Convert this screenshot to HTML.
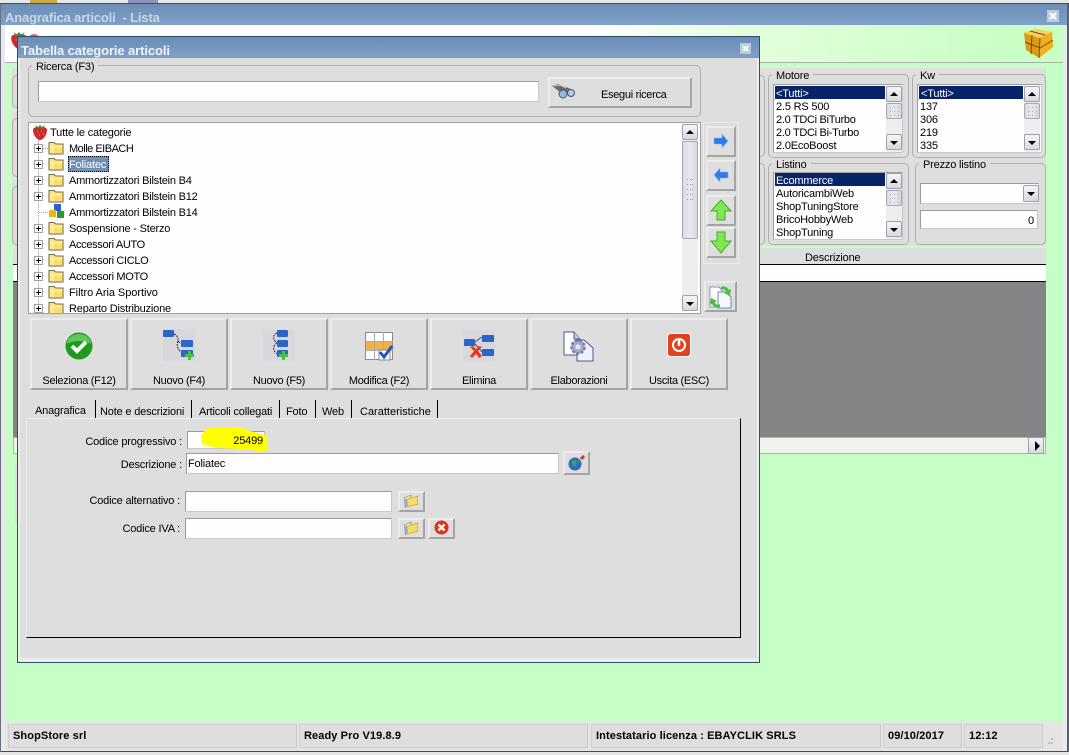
<!DOCTYPE html>
<html><head><meta charset="utf-8"><style>
html,body{margin:0;padding:0;width:1069px;height:755px;overflow:hidden;background:#e6e6e6}
*{box-sizing:border-box}
body{font:11px/14px "Liberation Sans",sans-serif;color:#000;position:relative}
div,span.a,svg{position:absolute}
.t{white-space:nowrap;height:14px;margin-top:1px;letter-spacing:-.18px}
.n{letter-spacing:-.3px}
.r{text-align:right}
.c{text-align:center}
.g{background:#dedede}
.gb{border:1px solid #aeaeae;border-radius:5px}
.lg{background:#dedede;padding:0 4px;white-space:nowrap;height:14px}
.inp{background:#fffdff;border:1px solid #9c9c9c;border-right-color:#c8c8c8;border-bottom-color:#c8c8c8}
.btn{background:#dedede;border:2px solid;border-color:#ececec #a4a4a4 #a4a4a4 #ececec}
.sb{background:#eeeeee}
.sbb{background:linear-gradient(#f4f4f8,#d8d8e0);border:1px solid #a0a0a8;border-radius:2px;width:16px;height:16px}
.th{background:linear-gradient(90deg,#dcdce2,#e8e8ee,#d8d8e0);border:1px solid #a8a8b2;border-radius:2px;width:16px}
.th.s:after{content:"";position:absolute;left:3px;top:3px;width:1px;height:1px;background:#a8a8b0;box-shadow:4px 0 #a8a8b0,8px 0 #a8a8b0,0 4px #a8a8b0,4px 4px #a8a8b0,8px 4px #a8a8b0,0 8px #a8a8b0,4px 8px #a8a8b0,8px 8px #a8a8b0}
.up:after,.dn:after{content:"";position:absolute;left:3px;width:0;height:0;border-left:4px solid transparent;border-right:4px solid transparent}
.up:after{top:5px;border-bottom:4px solid #000}
.dn:after{top:6px;border-top:4px solid #000}
.sel{background:#082468;color:#fff;height:13px}
.st{background:#dedede;border:1px solid #d2ccd2;border-right-color:#c8c8c8;top:724px;height:24px;font-family:"Liberation Sans",sans-serif;font-weight:bold;letter-spacing:.1px;padding:4px 0 0 4px;white-space:nowrap}
.tab{border-right:1px solid #000;border-bottom:0;height:18px;top:400px}
</style></head><body>
<svg width="0" height="0" style="left:0;top:0">
<defs>
<symbol id="fo" viewBox="0 0 16 16"><path d="M1 2.500h5l1.500 1.500H15V14H1z" fill="#ffe88a" stroke="#7a6a30" stroke-width="1"/><path d="M2 5h12v8H2z" fill="#ffec8e"/><path d="M6 8h8v5H6z" fill="#f7d060" opacity=".6"/></symbol>
<symbol id="pl" viewBox="0 0 9 9"><rect x=".5" y=".5" width="8" height="8" fill="#fff" stroke="#a0a0a0"/><path d="M2 4.500h5M4.500 2v5" stroke="#000"/></symbol>
<symbol id="sw" viewBox="0 0 16 17"><path d="M1 6c0-3 4-3 7-3s7 0 7 3c0 5-4 10-7 10S1 11 1 6z" fill="#cc2a2a"/><path d="M3 1l3 2 2-2 2 2 3-2-2 4-3-1-3 1z" fill="#4c8a2a"/><path d="M5 8h1M9 7h1M7 11h1M11 10h1" stroke="#ef9a9a"/></symbol>
<symbol id="bf" viewBox="0 0 22 18"><path d="M3 5l8-3v12l-7 3z" fill="#ffe98a" stroke="#9a9aa0"/><path d="M6 7l13-4v10l-12 3z" fill="#f6dc62" stroke="#c8b040"/><path d="M3 6l3 1v8l-2 2z" fill="#8fa6e0"/></symbol>
</defs>
</svg>

<!-- top strip -->
<div style="left:30px;top:0;width:27px;height:4px;background:#c8a840"></div>
<div style="left:128px;top:0;width:30px;height:4px;background:#9090b8"></div>
<div style="left:0;top:3px;width:1069px;height:1px;background:#3a5068"></div>

<!-- main window -->
<div style="left:0;top:4px;width:1069px;height:748px;background:#e9e9e9;border-left:1px solid #6a7080;border-right:2px solid #56606e;border-bottom:1px solid #3a5068"></div>
<div style="left:1px;top:4px;width:1066px;height:21px;background:linear-gradient(#6a8db6,#7fa0c8)"></div>
<div class="t" style="left:5px;top:10px;font-size:13px;font-weight:bold;color:#c9d6e6;letter-spacing:-.15px">Anagrafica articoli&nbsp; - Lista</div>
<svg style="left:1047px;top:10px" width="12" height="12"><rect width="12" height="12" fill="#b8cce0"/><path d="M3 3l6 6M9 3l-6 6" stroke="#fff" stroke-width="2.200"/></svg>

<div style="left:5px;top:25px;width:1058px;height:697px;background:#c6ffc6"></div>
<div style="left:5px;top:25px;width:1058px;height:37px;background:linear-gradient(90deg,#fff 0,#fff 55%,#e4ffdc 70%,#c8ffc4 95%)"></div>
<div style="left:5px;top:62px;width:1058px;height:1px;background:#a8b0a8"></div>
<svg style="left:10px;top:31px" width="32" height="20"><use href="#sw" x="0" y="0" width="18" height="19"/><circle cx="24" cy="9" r="6" fill="#d87050"/></svg>
<svg style="left:1023px;top:28px" width="30" height="30" viewBox="0 0 30 30"><path d="M1 5L12 1l17 3 1 15-14 11L3 22z" fill="#dd9c10"/><path d="M1 5L12 1l17 3-12 6z" fill="#f8d060"/><path d="M17 10l12-6 1 15-14 11z" fill="#eeb020"/><path d="M17 10l-1 20M2 14l15 6 13-8M7 3l15 4M9 7l-1 19" stroke="#6a5010" fill="none"/></svg>

<!-- background panels left -->
<div class="g" style="left:12px;top:68px;width:8px;height:42px"></div>
<div class="g" style="left:12px;top:112px;width:8px;height:66px"></div>
<div class="g" style="left:12px;top:180px;width:8px;height:66px"></div>
<div class="gb" style="left:12px;top:75px;width:12px;height:33px;background:#dedede"></div>
<div class="gb" style="left:12px;top:118px;width:12px;height:59px;background:#dedede"></div>
<div class="gb" style="left:12px;top:186px;width:12px;height:59px;background:#dedede"></div>
<div class="g" style="left:13px;top:248px;width:8px;height:16px"></div>

<!-- background right panels -->
<div class="g" style="left:750px;top:68px;width:296px;height:178px"></div>
<div class="gb" style="left:740px;top:75px;width:25px;height:82px"></div>
<div class="gb" style="left:740px;top:163px;width:25px;height:82px"></div>

<div class="gb" style="left:768px;top:74px;width:141px;height:84px"></div>
<div class="lg t" style="left:772px;top:68px">Motore</div>
<div class="inp" style="left:773px;top:84px;width:130px;height:69px"></div>
<div class="sel" style="left:775px;top:86px;width:110px"></div>
<div class="t" style="left:776px;top:86px;color:#fff">&lt;Tutti&gt;</div>
<div class="t" style="left:776px;top:99px">2.5 RS 500</div>
<div class="t n" style="left:776px;top:112px">2.0 TDCi BiTurbo</div>
<div class="t n" style="left:776px;top:125px">2.0 TDCi Bi-Turbo</div>
<div class="t" style="left:776px;top:138px">2.0EcoBoost</div>
<div class="sb" style="left:886px;top:86px;width:16px;height:66px"></div>
<div class="sbb up" style="left:886px;top:86px"></div>
<div class="th s" style="left:886px;top:103px;height:16px"></div>
<div class="sbb dn" style="left:886px;top:134px"></div>

<div class="gb" style="left:912px;top:74px;width:134px;height:84px"></div>
<div class="lg t" style="left:916px;top:68px">Kw</div>
<div class="inp" style="left:917px;top:84px;width:125px;height:69px"></div>
<div class="sel" style="left:919px;top:86px;width:104px"></div>
<div class="t" style="left:921px;top:86px;color:#fff">&lt;Tutti&gt;</div>
<div class="t" style="left:920px;top:99px">137</div>
<div class="t" style="left:920px;top:112px">306</div>
<div class="t" style="left:920px;top:125px">219</div>
<div class="t" style="left:920px;top:138px">335</div>
<div class="sb" style="left:1024px;top:86px;width:16px;height:66px"></div>
<div class="sbb up" style="left:1024px;top:86px"></div>
<div class="th s" style="left:1024px;top:103px;height:16px"></div>
<div class="sbb dn" style="left:1024px;top:134px"></div>

<div class="gb" style="left:768px;top:163px;width:141px;height:82px"></div>
<div class="lg t" style="left:772px;top:157px">Listino</div>
<div class="inp" style="left:773px;top:172px;width:130px;height:68px"></div>
<div class="sel" style="left:775px;top:173px;width:110px"></div>
<div class="t" style="left:776px;top:173px;color:#fff">Ecommerce</div>
<div class="t" style="left:776px;top:186px">AutoricambiWeb</div>
<div class="t" style="left:776px;top:199px">ShopTuningStore</div>
<div class="t" style="left:776px;top:212px">BricoHobbyWeb</div>
<div class="t" style="left:776px;top:225px">ShopTuning</div>
<div class="sb" style="left:886px;top:173px;width:16px;height:66px"></div>
<div class="sbb up" style="left:886px;top:173px"></div>
<div class="th s" style="left:886px;top:190px;height:16px"></div>
<div class="sbb dn" style="left:886px;top:221px"></div>

<div class="gb" style="left:915px;top:163px;width:131px;height:82px"></div>
<div class="lg t" style="left:919px;top:157px">Prezzo listino</div>
<div class="inp" style="left:920px;top:183px;width:119px;height:21px"></div>
<div class="sbb dn" style="left:1023px;top:185px;height:17px"></div>
<div class="inp" style="left:920px;top:210px;width:118px;height:19px"></div>
<div class="t r" style="left:980px;top:213px;width:54px">0</div>

<!-- grid -->
<div class="g" style="left:750px;top:248px;width:296px;height:16px"></div>
<div class="t" style="left:805px;top:250px">Descrizione</div>
<div style="left:13px;top:264px;width:1033px;height:1px;background:#000"></div>
<div style="left:13px;top:265px;width:1033px;height:16px;background:#fffdff"></div>
<div style="left:13px;top:281px;width:1033px;height:1px;background:#000"></div>
<div style="left:13px;top:282px;width:1033px;height:155px;background:#858385"></div>
<div style="left:13px;top:437px;width:1033px;height:17px;background:#f2f2ec;border:1px solid #b0b0b8"></div>
<div class="sbb" style="left:1028px;top:437px;height:17px"></div>
<svg style="left:1034px;top:441px" width="7" height="10"><path d="M1 0l5 5-5 5z" fill="#000"/></svg>
<div style="left:15px;top:463px;width:3px;height:59px;background:#dedede"></div>

<!-- status bar -->
<div class="g" style="left:5px;top:722px;width:1058px;height:29px;background:#e4e4e4"></div>
<div class="st" style="left:8px;width:289px">ShopStore srl</div>
<div class="st" style="left:299px;width:289px">Ready Pro V19.8.9</div>
<div class="st" style="left:591px;width:290px">Intestatario licenza : EBAYCLIK SRLS</div>
<div class="st" style="left:883px;width:79px">09/10/2017</div>
<div class="st" style="left:964px;width:79px">12:12</div>
<svg style="left:1046px;top:737px" width="10" height="10"><path d="M5 1h2v2H5zM2 5h2v2H2zM5 5h2v2H5z" fill="#c0c0c0"/></svg>

<!-- dialog -->
<div style="left:17px;top:36px;width:743px;height:627px;background:#ececec;border:1px solid #2f4c6c;border-top-width:1px"></div>
<div style="left:18px;top:37px;width:741px;height:21px;background:linear-gradient(#6a8db6,#7fa0c8)"></div>
<div class="t" style="left:21px;top:43px;font-size:13px;font-weight:bold;color:#f0f4f8;letter-spacing:-.1px">Tabella categorie articoli</div>
<svg style="left:740px;top:43px" width="11" height="11"><rect width="11" height="11" fill="#b8cce0"/><path d="M3 3l5 5M8 3l-5 5" stroke="#fff" stroke-width="2"/></svg>
<div class="g" style="left:20px;top:58px;width:737px;height:600px"></div>

<!-- ricerca -->
<div class="gb" style="left:28px;top:65px;width:673px;height:52px"></div>
<div class="lg t" style="left:32px;top:59px">Ricerca (F3)</div>
<div class="inp" style="left:38px;top:81px;width:501px;height:21px"></div>
<div class="btn" style="left:548px;top:77px;width:144px;height:31px"></div>
<svg style="left:551px;top:83px" width="26" height="18" viewBox="0 0 26 18"><path d="M1 3l6-2 8 3 7 3v3H13L9 9z" fill="#6a6a6a"/><path d="M3 3l6-1 6 3" stroke="#cfcfcf" fill="none"/><circle cx="12" cy="11" r="4" fill="#90b8ea" stroke="#555"/><circle cx="20" cy="10" r="3.500" fill="#a8ccf2" stroke="#555"/></svg>
<div class="t n" style="left:601px;top:87px">Esegui ricerca</div>

<!-- tree -->
<div style="left:28px;top:122px;width:673px;height:192px;background:#fffdff;border:1px solid #a0a0a0;overflow:hidden">
<div style="left:9px;top:17px;width:1px;height:170px;border-left:1px dotted #a8a8a8"></div>
<svg style="left:3px;top:1px" width="16" height="17"><use href="#sw" width="16" height="17"/></svg>
<div class="t" style="left:21px;top:2px">Tutte le categorie</div>

<div style="left:10px;top:25px;width:9px;border-top:1px dotted #a8a8a8;height:1px"></div><svg style="left:5px;top:21px" width="9" height="9"><use href="#pl"/></svg><svg style="left:19px;top:17px" width="16" height="16"><use href="#fo"/></svg><div class="t" style="left:40px;top:18px;letter-spacing:-.5px">Molle EIBACH</div>

<svg style="left:5px;top:37px" width="9" height="9"><use href="#pl"/></svg><svg style="left:19px;top:33px" width="16" height="16"><use href="#fo"/></svg><div style="left:39px;top:33px;width:41px;height:16px;background:#6f8fb5;border:1px dotted #000"></div><div class="t" style="left:40px;top:34px;color:#fff">Foliatec</div>

<svg style="left:5px;top:53px" width="9" height="9"><use href="#pl"/></svg><svg style="left:19px;top:49px" width="16" height="16"><use href="#fo"/></svg><div class="t n" style="left:40px;top:50px;letter-spacing:-.22px">Ammortizzatori Bilstein B4</div>

<svg style="left:5px;top:69px" width="9" height="9"><use href="#pl"/></svg><svg style="left:19px;top:65px" width="16" height="16"><use href="#fo"/></svg><div class="t n" style="left:40px;top:66px;letter-spacing:-.22px">Ammortizzatori Bilstein B12</div>

<svg style="left:20px;top:81px" width="16" height="15" viewBox="0 0 16 15"><rect x="5" y="0" width="7" height="7" fill="#2a62c8"/><rect x="0" y="6" width="7" height="7" fill="#e8b810"/><rect x="8" y="7" width="7" height="7" fill="#2a9a30"/></svg><div style="left:10px;top:89px;width:9px;border-top:1px dotted #a8a8a8;height:1px"></div><div class="t n" style="left:40px;top:82px;letter-spacing:-.22px">Ammortizzatori Bilstein B14</div>

<svg style="left:5px;top:101px" width="9" height="9"><use href="#pl"/></svg><svg style="left:19px;top:97px" width="16" height="16"><use href="#fo"/></svg><div class="t" style="left:40px;top:98px;letter-spacing:-.2px">Sospensione - Sterzo</div>

<svg style="left:5px;top:117px" width="9" height="9"><use href="#pl"/></svg><svg style="left:19px;top:113px" width="16" height="16"><use href="#fo"/></svg><div class="t" style="left:40px;top:114px;letter-spacing:-.33px">Accessori AUTO</div>

<svg style="left:5px;top:133px" width="9" height="9"><use href="#pl"/></svg><svg style="left:19px;top:129px" width="16" height="16"><use href="#fo"/></svg><div class="t" style="left:40px;top:130px;letter-spacing:-.33px">Accessori CICLO</div>

<svg style="left:5px;top:149px" width="9" height="9"><use href="#pl"/></svg><svg style="left:19px;top:145px" width="16" height="16"><use href="#fo"/></svg><div class="t" style="left:40px;top:146px;letter-spacing:-.33px">Accessori MOTO</div>

<svg style="left:5px;top:165px" width="9" height="9"><use href="#pl"/></svg><svg style="left:19px;top:161px" width="16" height="16"><use href="#fo"/></svg><div class="t" style="left:40px;top:162px;letter-spacing:-.05px">Filtro Aria Sportivo</div>

<svg style="left:5px;top:181px" width="9" height="9"><use href="#pl"/></svg><svg style="left:19px;top:177px" width="16" height="16"><use href="#fo"/></svg><div class="t" style="left:40px;top:178px">Reparto Distribuzione</div>
</div>
<!-- tree scrollbar -->
<div class="sb" style="left:682px;top:124px;width:16px;height:187px"></div>
<div class="sbb up" style="left:682px;top:124px"></div>
<div class="th" style="left:682px;top:141px;height:98px"></div>
<svg style="left:686px;top:178px" width="8" height="24"><path d="M1 1h1v1H1zM4 1h1v1H4zM6 1h1v1H6zM1 6h1v1H1zM4 6h1v1H4zM6 6h1v1H6zM1 11h1v1H1zM4 11h1v1H4zM6 11h1v1H6zM1 16h1v1H1zM4 16h1v1H4zM6 16h1v1H6zM1 21h1v1H1zM4 21h1v1H4zM6 21h1v1H6z" fill="#9a9aa4"/></svg>
<div class="sbb dn" style="left:682px;top:295px"></div>

<!-- right side buttons -->
<div style="left:703px;top:122px;width:36px;height:142px;border:1px solid #ececec;border-right-color:#ececec"></div>
<div class="btn" style="left:706px;top:126px;width:30px;height:31px"></div>
<svg style="left:713px;top:133px" width="16" height="16" viewBox="0 0 16 16"><path d="M1 5h8V1l6 7-6 7v-4H1z" fill="#2f7ae8" stroke="#8ab4f0" stroke-width=".6"/></svg>
<div class="btn" style="left:706px;top:160px;width:30px;height:31px"></div>
<svg style="left:713px;top:167px" width="16" height="16" viewBox="0 0 16 16"><path d="M15 5H7V1L1 8l6 7v-4h8z" fill="#2f7ae8" stroke="#8ab4f0" stroke-width=".6"/></svg>
<div class="btn" style="left:706px;top:195px;width:30px;height:31px"></div>
<svg style="left:709px;top:199px" width="24" height="24" viewBox="0 0 24 24"><path d="M12 1l10 11h-6v9H8v-9H2z" fill="#7fe84f" stroke="#4aa834"/></svg>
<div class="btn" style="left:706px;top:227px;width:30px;height:31px"></div>
<svg style="left:709px;top:230px" width="24" height="24" viewBox="0 0 24 24"><path d="M8 2h8v9h6L12 23 2 11h6z" fill="#7fe84f" stroke="#4aa834"/></svg>
<div class="btn" style="left:704px;top:281px;width:33px;height:31px"></div>
<svg style="left:708px;top:284px" width="26" height="26" viewBox="0 0 26 26"><path d="M2 3h9l4 5v15H2z" fill="#fff" stroke="#8a9ab8"/><path d="M10 8h7l6 5v11H10z" fill="#f4f8ff" stroke="#7a8aa8"/><path d="M13 3a6 6 0 0 1 8 3l2-1-1 7-6-3 2-1a3 3 0 0 0-5-2z" fill="#48c040"/><path d="M12 23a6 6 0 0 1-8-3l-2 1 1-7 6 3-2 1a3 3 0 0 0 5 2z" fill="#48c040"/></svg>

<!-- toolbar -->
<div class="btn" style="left:30px;top:318px;width:98px;height:72px"></div>
<div class="btn" style="left:130px;top:318px;width:98px;height:72px"></div>
<div class="btn" style="left:230px;top:318px;width:98px;height:72px"></div>
<div class="btn" style="left:330px;top:318px;width:98px;height:72px"></div>
<div class="btn" style="left:430px;top:318px;width:98px;height:72px"></div>
<div class="btn" style="left:530px;top:318px;width:98px;height:72px"></div>
<div class="btn" style="left:630px;top:318px;width:98px;height:72px"></div>
<div class="t c n" style="left:30px;top:373px;width:98px">Seleziona (F12)</div>
<div class="t c n" style="left:130px;top:373px;width:98px">Nuovo (F4)</div>
<div class="t c n" style="left:230px;top:373px;width:98px">Nuovo (F5)</div>
<div class="t c n" style="left:330px;top:373px;width:98px">Modifica (F2)</div>
<div class="t c n" style="left:430px;top:373px;width:98px">Elimina</div>
<div class="t c n" style="left:530px;top:373px;width:98px">Elaborazioni</div>
<div class="t c n" style="left:630px;top:373px;width:98px">Uscita (ESC)</div>

<svg style="left:65px;top:332px" width="28" height="28" viewBox="0 0 28 28"><circle cx="14" cy="14" r="13.500" fill="#1e9a1e"/><path d="M2 12a12 10 0 0 1 24 0c-6-4-18-4-24 0z" fill="#5cc85c"/><path d="M7 14l5 5 9-9" stroke="#fff" stroke-width="4" fill="none"/></svg>

<svg style="left:163px;top:329px" width="32" height="32" viewBox="0 0 32 32"><rect width="32" height="32" fill="#d8d8dc"/><rect x="0" y="1" width="11" height="7" rx="1" fill="#2a66c8"/><rect x="18" y="11" width="12" height="7" rx="1" fill="#2a66c8"/><rect x="18" y="21" width="12" height="7" rx="1" fill="#2a66c8"/><path d="M11 5c6 2 2 8 7 9M15 12c-2 4 0 9 3 11" stroke="#202070" fill="none" stroke-dasharray="2 1"/><path d="M25 22h3v3h3v3h-3v3h-3v-3h-3v-3h3z" fill="#48c040"/></svg>

<svg style="left:263px;top:329px" width="32" height="32" viewBox="0 0 32 32"><rect width="32" height="32" fill="#d8d8dc"/><rect x="14" y="1" width="11" height="7" rx="1" fill="#2a66c8"/><rect x="14" y="11" width="11" height="7" rx="1" fill="#2a66c8"/><rect x="14" y="21" width="11" height="7" rx="1" fill="#2a66c8"/><path d="M14 4c-5 2-4 7 0 10M14 14c-5 3-4 8 0 11" stroke="#202070" fill="none" stroke-dasharray="2 1"/><path d="M19 22h3v3h3v3h-3v3h-3v-3h-3v-3h3z" fill="#48c040"/></svg>

<svg style="left:365px;top:332px" width="29" height="29" viewBox="0 0 29 29"><rect x=".5" y=".5" width="27" height="27" fill="#fff" stroke="#8a8a8a"/><rect x="1" y="9" width="26" height="9" fill="#f4b04a"/><path d="M9.500 0v28M18.500 0v28M0 9.500h28M0 18.500h28" stroke="#aaa"/><rect x="14" y="18" width="11" height="10" fill="#fff" stroke="#8a8a8a"/><path d="M15 20l4 5 8-11" stroke="#1a5ac0" stroke-width="3" fill="none"/></svg>

<svg style="left:463px;top:330px" width="32" height="32" viewBox="0 0 32 32"><rect width="32" height="32" fill="#d8d8dc"/><rect x="1" y="9" width="11" height="7" rx="1" fill="#2a66c8"/><rect x="19" y="5" width="12" height="7" rx="1" fill="#2a66c8"/><rect x="19" y="19" width="12" height="7" rx="1" fill="#2a66c8"/><path d="M12 12l7-5M12 14l7 8" stroke="#3a4a7a"/><path d="M7 17l3-1 3 3 3-3 3 1-4 4 4 5-3 2-3-4-4 4-2-2 4-5z" fill="#e83a1a"/></svg>

<svg style="left:563px;top:331px" width="32" height="32" viewBox="0 0 32 32"><path d="M1 1h10l6 7v16H1z" fill="#fff" stroke="#4a5a8a"/><path d="M11 1v7h6" fill="#b8d0f0" stroke="#4a5a8a"/><path d="M14 9h7l9 8v13H14z" fill="#eef4ff" stroke="#4a5a8a"/><circle cx="15" cy="16" r="6.500" fill="#aaaad0" stroke="#7a7aa8" stroke-width="2.500" stroke-dasharray="3 1.500"/><circle cx="15" cy="16" r="2.500" fill="#e8e8f4"/></svg>

<svg style="left:667px;top:333px" width="24" height="24" viewBox="0 0 24 24"><rect x=".5" y=".5" width="23" height="23" rx="3" fill="#e2421c" stroke="#fff"/><circle cx="12" cy="12" r="6" fill="none" stroke="#fff" stroke-width="2"/><path d="M12 7v6" stroke="#fff" stroke-width="2.500"/></svg>

<!-- tabs -->
<div class="t" style="left:35px;top:403px">Anagrafica</div>
<div class="t" style="left:100px;top:404px">Note e descrizioni</div>
<div class="t" style="left:199px;top:404px">Articoli collegati</div>
<div class="t" style="left:286px;top:404px">Foto</div>
<div class="t" style="left:322px;top:404px">Web</div>
<div class="t" style="left:360px;top:404px;letter-spacing:0">Caratteristiche</div>
<div class="tab" style="left:95px;width:1px"></div>
<div class="tab" style="left:191px;width:1px"></div>
<div class="tab" style="left:279px;width:1px"></div>
<div class="tab" style="left:315px;width:1px"></div>
<div class="tab" style="left:351px;width:1px"></div>
<div class="tab" style="left:437px;width:1px"></div>
<div style="left:26px;top:418px;width:715px;height:220px;border:1px solid #000;border-color:#ececec #000 #000 #ececec"></div>

<!-- form -->
<div class="t r" style="left:30px;top:434px;width:152px">Codice progressivo :</div>
<div class="inp" style="left:187px;top:431px;width:78px;height:18px"></div>
<svg style="left:200px;top:425px" width="70" height="28"><path d="M5 5l5-2 30-1 10 4 12 3 6 3v14l-13 1-3-3-12 0-22-1-10-2-6-2-1-8z" fill="#ffff00"/></svg>
<div class="t r" style="left:210px;top:433px;width:53px">25499</div>
<div class="t r" style="left:30px;top:457px;width:152px">Descrizione :</div>
<div class="inp" style="left:186px;top:453px;width:373px;height:21px"></div>
<div class="t" style="left:188px;top:456px">Foliatec</div>
<div class="btn" style="left:563px;top:451px;width:27px;height:24px"></div>
<svg style="left:567px;top:453px" width="19" height="19" viewBox="0 0 19 19"><circle cx="8" cy="11" r="6.500" fill="#2a6ac8"/><path d="M4 8l5-1 1 4-3 3-2-3zM10 6l3 2-1 3" fill="#48a040"/><path d="M13 5l3-3 2 2-3 3z" fill="#d83020"/></svg>

<div class="t r" style="left:30px;top:493px;width:150px">Codice alternativo :</div>
<div class="inp" style="left:185px;top:491px;width:207px;height:21px"></div>
<div class="btn" style="left:398px;top:491px;width:27px;height:21px"></div>
<svg style="left:402px;top:493px" width="18" height="16"><use href="#bf" width="18" height="16"/></svg>

<div class="t r" style="left:30px;top:521px;width:150px">Codice IVA :</div>
<div class="inp" style="left:185px;top:518px;width:207px;height:21px"></div>
<div class="btn" style="left:398px;top:518px;width:27px;height:21px"></div>
<svg style="left:402px;top:520px" width="18" height="16"><use href="#bf" width="18" height="16"/></svg>
<div class="btn" style="left:428px;top:518px;width:27px;height:21px"></div>
<svg style="left:434px;top:520px" width="15" height="15" viewBox="0 0 15 15"><circle cx="7.500" cy="7.500" r="7" fill="#e0301e"/><path d="M4.500 4.500l6 6M10.500 4.500l-6 6" stroke="#fff" stroke-width="2.500"/></svg>
</body></html>
